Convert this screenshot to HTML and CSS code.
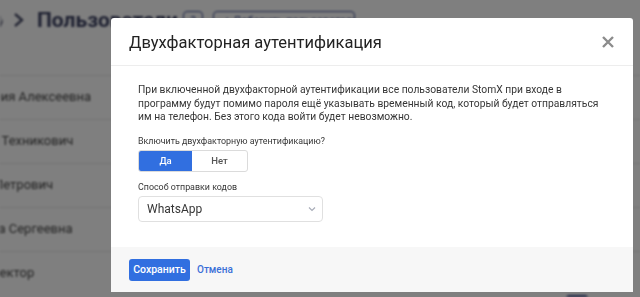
FILE: index.html
```html
<!DOCTYPE html>
<html lang="ru">
<head>
<meta charset="utf-8">
<title>Двухфакторная аутентификация</title>
<link rel="stylesheet" href="styles.css">
</head>
<body>
<div class="page">
  <div class="topbar">
    <span class="crumb-prev">и</span>
    <svg class="crumb-sep" width="11" height="16" viewBox="0 0 11 16"><path d="M2 2l7 6-7 6" fill="none" stroke="#4a4e6a" stroke-width="2.4"/></svg>
    <h1 class="page-title">Пользователи</h1>
    <span class="icon-btn">?</span>
    <span class="add-btn">+ Добавить пользователя</span>
  </div>
  <ul class="users">
    <li>Мария Алексеевна</li>
    <li>Лев Техникович</li>
    <li>Ян Петрович</li>
    <li>Анна Сергеевна</li>
    <li>Директор</li>
  </ul>
  <div class="pager"><span class="pager-btn"></span></div>
</div>
<div class="backdrop"></div>
<div class="modal">
  <header class="modal-head">
    <h2 class="modal-title">Двухфакторная аутентификация</h2>
    <button class="close" aria-label="Закрыть">
      <svg width="12" height="12" viewBox="0 0 12 12"><path d="M1 1l10 10M11 1L1 11" stroke="#8c8c8c" stroke-width="2.4"/></svg>
    </button>
  </header>
  <section class="modal-body">
    <p class="intro">При включенной двухфакторной аутентификации все пользователи StomX при входе в программу будут помимо пароля ещё указывать временный код, который будет отправляться им на телефон. Без этого кода войти будет невозможно.</p>
    <div class="field">
      <label class="label">Включить двухфакторную аутентификацию?</label>
      <div class="toggle">
        <span class="opt active">Да</span>
        <span class="opt">Нет</span>
      </div>
    </div>
    <div class="field">
      <label class="label">Способ отправки кодов</label>
      <div class="select">
        <span>WhatsApp</span>
        <svg width="8" height="6" viewBox="0 0 8 6"><path d="M1 1.5l3 3 3-3" fill="none" stroke="#a8acb8" stroke-width="1.2"/></svg>
      </div>
    </div>
  </section>
  <footer class="modal-foot">
    <button class="btn-save">Сохранить</button>
    <a class="btn-cancel">Отмена</a>
  </footer>
</div>
</body>
</html>
```
FILE: styles.css
```css
* { box-sizing: border-box; }
html, body { margin: 0; padding: 0; }
body {
  width: 640px;
  height: 297px;
  overflow: hidden;
  font-family: Roboto, "Noto Sans", Arial, sans-serif;
  background: #fff;
  color: #363636;
}
.page {
  filter: blur(0.8px);
  width: 640px;
  height: 297px;
  overflow: hidden;
}
.topbar {
  display: flex;
  align-items: center;
  height: 40px;
  margin-left: -6px;
  color: #3b3f5c;
}
.crumb-prev {
  font-size: 20px;
  font-weight: 700;
  width: 9px;
  overflow: hidden;
  direction: rtl;
  text-indent: -5px;
  opacity: 0.6;
  flex: none;
}
.crumb-sep { margin-left: 10px; flex: none; }
.page-title {
  margin: 0 0 0 13px;
  font-size: 21px;
  font-weight: 700;
  color: #3d4263;
  width: 138px;
  flex: none;
}
.icon-btn {
  width: 20px; height: 19px;
  margin-left: 8px;
  border: 1px solid #3d4c8f;
  border-radius: 4px;
  font-size: 11px; text-align: center; line-height: 17px;
  color: #3d4c8f;
  flex: none;
}
.add-btn {
  margin-left: 10px;
  border: 1px solid #3d4c8f;
  border-radius: 4px;
  font-size: 11px;
  padding: 2px 10px;
  color: #3d4c8f;
  width: 142px;
  white-space: nowrap;
  overflow: hidden;
  flex: none;
}
.users {
  list-style: none;
  margin: 35px 0 0 -25px;
  padding: 0;
}
.users li {
  height: 44px;
  border-top: 1px solid #e4e4e4;
  font-size: 13px;
  line-height: 42px;
  color: #444;
}
.pager { display: flex; justify-content: flex-end; padding-right: 52px; }
.pager-btn { width: 22px; height: 10px; background: #3a4a8a; border-radius: 3px; }
.backdrop {
  position: fixed;
  inset: 0;
  background: rgba(0,0,0,0.5);
}
.modal {
  position: fixed;
  left: 111px;
  top: 18px;
  width: 522px;
  height: 274px;
  background: #fff;
  border-radius: 3px 3px 0 0;
  display: flex;
  flex-direction: column;
  overflow: hidden;
}
.modal-head {
  display: flex;
  align-items: center;
  justify-content: space-between;
  height: 48px;
  padding: 0 19px 0 18px;
  border-bottom: 1px solid #ededed;
}
.modal-title {
  margin: 0;
  font-size: 16.5px;
  font-weight: 400;
  color: #222;
  padding-top: 1px;
}
.close {
  border: 0; background: none; padding: 0;
  width: 12px; height: 12px;
  display: flex;
}
.modal-body {
  flex: 1;
  padding: 17px 27px 0 27px;
}
.intro {
  margin: 0;
  font-size: 10.3px;
  line-height: 13.5px;
  color: #363636;
}
.field { margin-top: 10px; }
.field + .field { margin-top: 8px; }
.label {
  display: block;
  font-size: 8.9px;
  line-height: 14px;
  color: #363636;
  margin-bottom: 2px;
}
.toggle {
  display: flex;
  width: 110px;
  height: 22px;
  border: 1px solid #dbdbdb;
  border-radius: 3px;
  overflow: hidden;
}
.opt {
  flex: 1;
  display: flex;
  align-items: center;
  justify-content: center;
  font-size: 9.5px;
  color: #555;
  font-weight: 500;
}
.opt.active {
  background: #316fe0;
  color: #fff;
  flex: 0 0 53px;
}
.select {
  width: 185px;
  height: 26px;
  border: 1px solid #e0e0e0;
  border-radius: 4px;
  display: flex;
  align-items: center;
  justify-content: space-between;
  padding: 0 6px 0 8px;
  font-size: 12px;
  color: #363636;
}
.modal-foot {
  height: 45px;
  background: #f7f7f7;
  display: flex;
  align-items: center;
  padding: 0 18px;
  gap: 7px;
}
.btn-save {
  height: 22px;
  width: 61px;
  border: 0;
  border-radius: 3px;
  background: #316fe0;
  color: #fff;
  font-family: Roboto, sans-serif;
  font-size: 10.5px;
  font-weight: 500;
  padding: 0;
}
.btn-cancel {
  font-size: 10px;
  color: #3a6fd8;
  font-weight: 500;
}
```
